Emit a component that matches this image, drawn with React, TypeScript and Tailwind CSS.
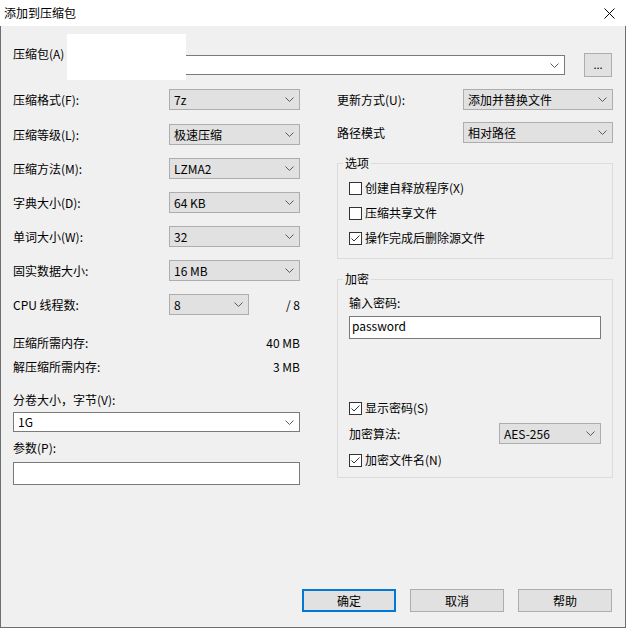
import React from "react";

const Chevron = () => (
  <svg width="9" height="5" viewBox="0 0 9 5" className="shrink-0">
    <path d="M0.5 0.5 L4.5 4.5 L8.5 0.5" fill="none" stroke="#5a5a5a" strokeWidth="1" />
  </svg>
);

const Select: React.FC<{ value: string; className?: string; editable?: boolean }> = ({ value, className = "", editable }) => (
  <div
    className={`flex items-center justify-between pl-[4px] pr-[5px] border ${
      editable ? "bg-white border-[#7a7a7a]" : "bg-[#e1e1e1] border-[#adadad]"
    } ${className}`}
  >
    <span className="leading-[14px]">{value}</span>
    <Chevron />
  </div>
);

const CheckBox: React.FC<{ label: string; checked?: boolean }> = ({ label, checked }) => (
  <div className="flex items-center h-[16px]">
    <div className="w-[13px] h-[13px] border border-[#333333] bg-white flex items-center justify-center shrink-0">
      {checked && (
        <svg width="11" height="11" viewBox="0 0 11 11">
          <path d="M1.5 5.5 L4 8 L9.5 2.5" fill="none" stroke="#333333" strokeWidth="1" />
        </svg>
      )}
    </div>
    <span className="ml-[3px]">{label}</span>
  </div>
);

const Button: React.FC<{ label: string; primary?: boolean }> = ({ label, primary }) => (
  <div
    className={`w-[94px] h-[23px] bg-[#e1e1e1] flex items-center justify-center ${
      primary ? "border-2 border-[#0078d7]" : "border border-[#adadad]"
    }`}
  >
    {label}
  </div>
);

const leftRows = [
  { label: "压缩格式(F):", value: "7z", mt: "mt-0" },
  { label: "压缩等级(L):", value: "极速压缩", mt: "mt-[14px]" },
  { label: "压缩方法(M):", value: "LZMA2", mt: "mt-[13px]" },
  { label: "字典大小(D):", value: "64 KB", mt: "mt-[13px]" },
  { label: "单词大小(W):", value: "32", mt: "mt-[13px]" },
  { label: "固实数据大小:", value: "16 MB", mt: "mt-[13px]" },
];

export default function App() {
  return (
    <div
      className="relative w-[626px] h-[628px] flex flex-col text-[12px] text-black"
      style={{ fontFamily: '"Noto Sans CJK SC", "Noto Sans", sans-serif' }}
    >
      {/* Title bar */}
      <div className="h-[26px] bg-white flex items-center justify-between pl-[4px] pr-[11px] shrink-0">
        <span>添加到压缩包</span>
        <svg width="11" height="11" viewBox="0 0 11 11">
          <path d="M0.5 0.5 L10.5 10.5 M10.5 0.5 L0.5 10.5" stroke="#000" strokeWidth="1" />
        </svg>
      </div>

      <div className="flex-1 flex flex-col bg-[#f0f0f0] border-x border-b border-[#6e6e6e] px-[12px]">
        {/* Archive */}
        <div className="mt-[27px] h-[24px] flex items-center">
          <span className="w-[60px] self-start -mt-[7px] leading-[16px]">压缩包(A)</span>
          <Select value="" editable className="w-[492px] h-[20px]" />
          <div className="ml-[19px] w-[28px] h-[24px] bg-[#e1e1e1] border border-[#adadad] flex items-center justify-center text-[11px] leading-none pb-[2px]">
            ...
          </div>
        </div>

        <div className="mt-[12px] flex">
          {/* Left column */}
          <div className="w-[287px] flex flex-col">
            {leftRows.map((r) => (
              <div key={r.label} className={`flex items-center h-[21px] ${r.mt}`}>
                <span className="w-[156px]">{r.label}</span>
                <Select value={r.value} className="w-[131px] h-[21px]" />
              </div>
            ))}
            <div className="flex items-center h-[21px] mt-[13px]">
              <span className="w-[156px]">CPU 线程数:</span>
              <Select value="8" className="w-[80px] h-[21px]" />
              <span className="flex-1 text-right">/ 8</span>
            </div>

            <div className="mt-[20px] h-[16px] flex items-center justify-between">
              <span>压缩所需内存:</span>
              <span>40 MB</span>
            </div>
            <div className="mt-[8px] h-[16px] flex items-center justify-between">
              <span>解压缩所需内存:</span>
              <span>3 MB</span>
            </div>

            <div className="mt-[17px] h-[16px] flex items-center">分卷大小，字节(V):</div>
            <Select value="1G" editable className="mt-[4px] w-full h-[20px]" />

            <div className="mt-[8px] h-[16px] flex items-center">参数(P):</div>
            <div className="mt-[6px] w-full h-[23px] bg-white border border-[#7a7a7a]" />
          </div>

          {/* Right column */}
          <div className="ml-[37px] w-[276px] flex flex-col">
            <div className="flex items-center h-[21px]">
              <span className="w-[126px]">更新方式(U):</span>
              <Select value="添加并替换文件" className="w-[150px] h-[21px]" />
            </div>
            <div className="flex items-center h-[21px] mt-[12px]">
              <span className="w-[126px]">路径模式</span>
              <Select value="相对路径" className="w-[150px] h-[21px]" />
            </div>

            <fieldset className="mt-[12px] border border-[#dcdcdc] px-[11px] pb-[12px]">
              <legend className="-ml-[6px] px-[2px] leading-[16px]">选项</legend>
              <div className="mt-[9px] flex flex-col gap-[9px]">
                <CheckBox label="创建自释放程序(X)" />
                <CheckBox label="压缩共享文件" />
                <CheckBox label="操作完成后删除源文件" checked />
              </div>
            </fieldset>

            <fieldset className="mt-[12px] border border-[#dcdcdc] px-[11px] pb-[9px]">
              <legend className="-ml-[6px] px-[2px] leading-[16px]">加密</legend>
              <div className="mt-[8px] h-[16px] flex items-center">输入密码:</div>
              <div className="mt-[5px] h-[23px] bg-white border border-[#7a7a7a] flex items-center px-[2px] pb-[3px]">
                password
              </div>
              <div className="mt-[61px]">
                <CheckBox label="显示密码(S)" checked />
              </div>
              <div className="mt-[7px] h-[21px] flex items-center justify-between">
                <span>加密算法:</span>
                <Select value="AES-256" className="w-[102px] h-[21px]" />
              </div>
              <div className="mt-[8px]">
                <CheckBox label="加密文件名(N)" checked />
              </div>
            </fieldset>
          </div>
        </div>

        {/* Buttons */}
        <div className="mt-auto mb-[15px] flex justify-end gap-[14px] pr-[1px]">
          <Button label="确定" primary />
          <Button label="取消" />
          <Button label="帮助" />
        </div>
      </div>

      {/* redacted area */}
      <div className="absolute left-[67px] top-[34px] w-[119px] h-[46px] bg-white" />
    </div>
  );
}
